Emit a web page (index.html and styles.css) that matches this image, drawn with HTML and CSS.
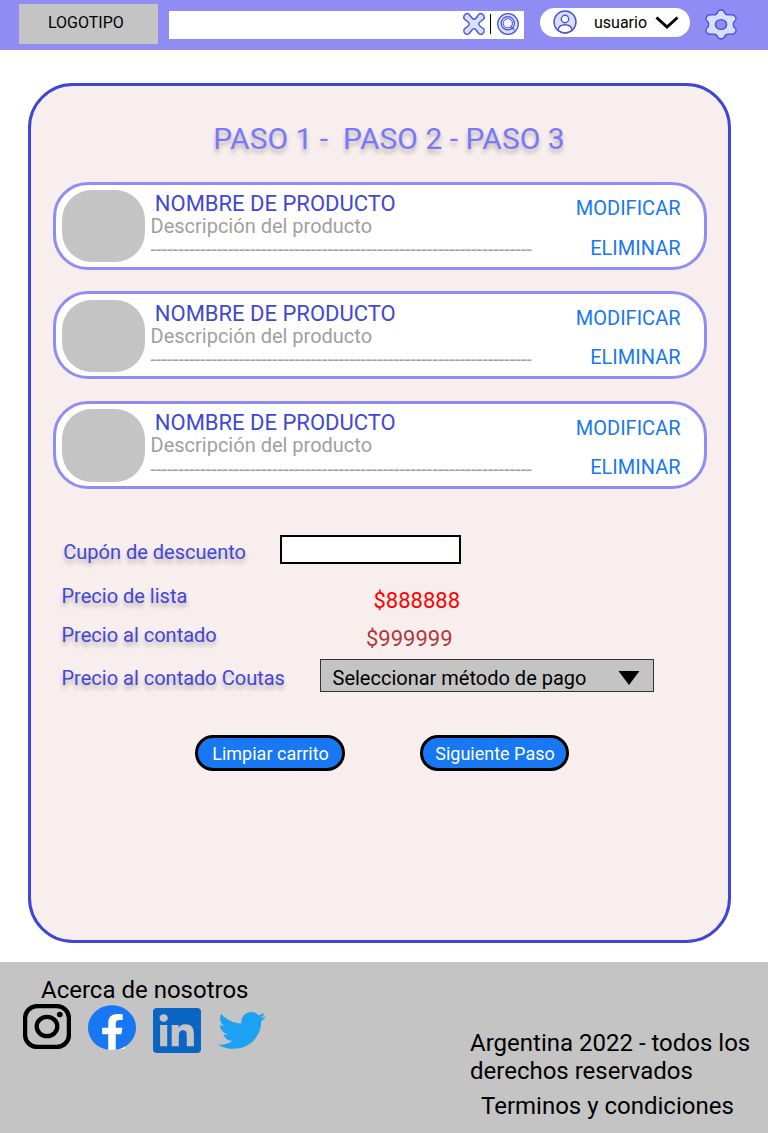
FILE: index.html
```html
<!DOCTYPE html>
<html lang="es">
<head>
<meta charset="utf-8">
<title>Carrito</title>
<link rel="stylesheet" href="styles.css">
</head>
<body>
<header class="topbar">
  <div class="logo">LOGOTIPO</div>
  <div class="search">
    <svg class="ico-clear" width="24" height="24" viewBox="0 0 24 24"><path d="M4 1.800Q5.500 1 7.300 2.500L9.500 5.500Q12 9 14.500 5.500L16.700 2.500Q18.500 1 20 1.800L21.800 3.500Q23 5.500 21.500 7.300L18.500 9.500Q15 12 18.500 14.500L21.500 16.700Q23 18.500 21.800 20.500L20 22.200Q18.500 23 16.700 21.500L14.500 18.500Q12 15 9.500 18.500L7.300 21.500Q5.500 23 4 22.200L2.200 20.500Q1 18.500 2.500 16.700L5.500 14.500Q9 12 5.500 9.500L2.500 7.300Q1 5.500 2.200 3.500Z"/></svg>
    <span class="bar"></span>
    <svg class="ico-find" width="24" height="24" viewBox="0 0 24 24"><circle cx="12" cy="12" r="10.300"/><circle cx="11.800" cy="11.300" r="6.600"/><circle cx="11.800" cy="11.300" r="4.600" stroke-width="1" class="lens"/><path d="M14.800 14.300L18.300 18"/></svg>
  </div>
  <div class="user">
    <svg class="avatar" width="24" height="24" viewBox="0 0 24 24"><circle cx="12" cy="12" r="11"/><circle class="hole" cx="12" cy="9" r="3.700"/><path class="hole" d="M5 20.300C5.500 16.200 8.500 14.800 12 14.800S18.500 16.200 19 20.300Q12 25.500 5 20.300Z"/></svg>
    <span class="user-name">usuario</span>
    <svg class="chevron" width="24" height="14" viewBox="0 0 24 14"><path d="M1.500 1.500L12 11L22.500 1.500"/></svg>
  </div>
  <svg class="gear" width="32" height="31" viewBox="0 0 32 32" preserveAspectRatio="none"><path d="M16 1Q18.500 1 19.200 3Q20.500 6.400 23.600 6.100L27.500 5.900Q29.500 6.300 30.700 8.500Q31.600 10.700 30.300 12L28.800 13.600Q27.500 16 28.800 18.400L30.300 20Q31.600 21.300 30.700 23.500Q29.500 25.700 27.500 26.100L23.600 25.900Q20.500 25.600 19.200 29Q18.500 31 16 31T12.800 29Q11.500 25.600 8.400 25.900L4.500 26.100Q2.500 25.700 1.300 23.500Q.4 21.300 1.700 20L3.200 18.400Q4.500 16 3.200 13.600L1.700 12Q.4 10.700 1.300 8.500Q2.500 6.300 4.500 5.900L8.400 6.100Q11.500 6.400 12.800 3Q13.500 1 16 1Z"/><ellipse cx="16" cy="16" rx="5.600" ry="5"/></svg>
</header>

<main class="card">
  <h1 class="steps">PASO 1 -  PASO 2 - PASO 3</h1>
  <section class="products">
    <article class="product">
      <div class="photo"></div>
      <div class="info"><h2>NOMBRE DE PRODUCTO</h2><p>Descripción del producto<br>---------------------------------------------------------------------</p></div>
      <div class="actions"><a>MODIFICAR</a><a>ELIMINAR</a></div>
    </article>
    <article class="product">
      <div class="photo"></div>
      <div class="info"><h2>NOMBRE DE PRODUCTO</h2><p>Descripción del producto<br>---------------------------------------------------------------------</p></div>
      <div class="actions"><a>MODIFICAR</a><a>ELIMINAR</a></div>
    </article>
    <article class="product">
      <div class="photo"></div>
      <div class="info"><h2>NOMBRE DE PRODUCTO</h2><p>Descripción del producto<br>---------------------------------------------------------------------</p></div>
      <div class="actions"><a>MODIFICAR</a><a>ELIMINAR</a></div>
    </article>
  </section>
  <section class="summary">
    <div class="row coupon"><span class="label">Cupón de descuento</span><div class="field"></div></div>
    <div class="row list"><span class="label">Precio de lista</span><span class="price list-price">$888888</span></div>
    <div class="row cash"><span class="label">Precio al contado</span><span class="price cash-price">$999999</span></div>
    <div class="row quotas"><span class="label">Precio al contado Coutas</span>
      <div class="select"><span>Seleccionar método de pago</span><svg width="22" height="14" viewBox="0 0 22 14"><path d="M.5 0H21.500L11 14Z"/></svg></div>
    </div>
  </section>
  <div class="buttons"><div class="btn">Limpiar carrito</div><div class="btn">Siguiente Paso</div></div>
</main>

<footer class="footer">
  <div class="about">
    <div class="about-title">Acerca de nosotros</div>
    <div class="social">
      <svg class="instagram" width="48" height="45" viewBox="0 0 48 45" fill="none" stroke="#000" stroke-width="4.300"><rect x="2.100" y="2.100" width="43.800" height="40.800" rx="12"/><ellipse cx="24" cy="22.500" rx="10.300" ry="9.700"/><ellipse cx="36.800" cy="10.500" rx="2.900" ry="2.700" fill="#000" stroke="none"/></svg>
      <svg class="facebook" width="48" height="45" viewBox="0 0 24 24" preserveAspectRatio="none"><path fill="#fff" d="M6.500 4h12v19.300l-4.600.6h-3.800l-3.600-1z"/><path fill="#1877f2" d="M24 12.073c0-6.627-5.373-12-12-12s-12 5.373-12 12c0 5.990 4.388 10.954 10.125 11.854v-8.385H7.078v-3.470h3.047V9.430c0-3.007 1.792-4.669 4.533-4.669 1.312 0 2.686.235 2.686.235v2.953H15.830c-1.491 0-1.956.925-1.956 1.874v2.250h3.328l-.532 3.470h-2.796v8.385C19.612 23.027 24 18.062 24 12.073z"/></svg>
      <svg class="linkedin" width="48" height="45" viewBox="0 0 24 24" preserveAspectRatio="none"><path fill="#0a66c2" d="M20.447 20.452h-3.554v-5.569c0-1.328-.027-3.037-1.852-3.037-1.853 0-2.136 1.445-2.136 2.939v5.667H9.351V9h3.414v1.561h.046c.477-.9 1.637-1.850 3.370-1.850 3.601 0 4.267 2.370 4.267 5.455v6.286zM5.337 7.433c-1.144 0-2.063-.926-2.063-2.065 0-1.138.92-2.063 2.063-2.063 1.140 0 2.064.925 2.064 2.063 0 1.139-.925 2.065-2.064 2.065zm1.782 13.019H3.555V9h3.564v11.452zM22.225 0H1.771C.792 0 0 .774 0 1.729v20.542C0 23.227.792 24 1.771 24h20.451C23.200 24 24 23.227 24 22.271V1.729C24 .774 23.200 0 22.222 0h.003z"/></svg>
      <svg class="twitter" width="48" height="45" viewBox="0 0 24 24" preserveAspectRatio="none"><path fill="#1da1f2" d="M23.953 4.570a10 10 0 01-2.825.775 4.958 4.958 0 002.163-2.723c-.951.555-2.005.959-3.127 1.184a4.920 4.920 0 00-8.384 4.482C7.690 8.095 4.067 6.130 1.640 3.162a4.822 4.822 0 00-.666 2.475c0 1.710.87 3.213 2.188 4.096a4.904 4.904 0 01-2.228-.616v.06a4.923 4.923 0 003.946 4.827 4.996 4.996 0 01-2.212.085 4.936 4.936 0 004.604 3.417 9.867 9.867 0 01-6.102 2.105c-.39 0-.779-.023-1.170-.067a13.995 13.995 0 007.557 2.209c9.053 0 13.998-7.496 13.998-13.985 0-.21 0-.42-.015-.63A9.935 9.935 0 0024 4.590z"/></svg>
    </div>
  </div>
  <div class="legal"><p>Argentina 2022 - todos los derechos reservados</p><p class="terms">Terminos y condiciones</p></div>
</footer>
</body>
</html>
```
FILE: styles.css
```css
* { box-sizing: border-box; }
body { margin: 0; width: 768px; background: #fff; font-family: Roboto, sans-serif; color: #000; }
h1, h2, p { margin: 0; font-weight: 400; }
svg { display: block; flex: none; }

.topbar { display: flex; align-items: flex-start; height: 50px; background: #8f8cf3; padding-left: 19px; }
.logo { width: 139px; height: 40px; margin-top: 4px; padding-left: 29px; background: #c4c4c4; font-size: 16px; line-height: 37px; }
.search { display: flex; align-items: center; justify-content: flex-end; width: 355px; height: 28px; margin: 11px 0 0 11px; background: #fff; padding: 0 4px 2px 0; }
.search svg, .user svg, .gear { fill: #d7e0ff; stroke: #4b50d8; stroke-width: 1.4; }
.search .ico-find { stroke-width: 1.2; }
.search .lens { fill: #f1f4ff; }
.bar { width: 1px; height: 20px; background: #000; margin: 0 5px 0 4px; }
.user { display: flex; align-items: center; width: 150px; height: 29px; margin: 8px 0 0 16px; padding-left: 13px; background: #fff; border-radius: 15px; }
.user .avatar { margin-bottom: 1.500px; }
.hole { fill: #fff; }
.user-name { width: 61px; margin-left: 17px; font-size: 16px; line-height: 29px; }
.user .chevron { fill: none; stroke: #000; stroke-width: 3; }
.gear { margin: 9px 0 0 15px; overflow: visible; }
.gear ellipse { fill: #8f8cf3; }

.card { width: 703px; height: 860px; margin: 33px 0 0 28px; padding: 35px 0 0 21.500px; border: 3px solid #3e45d7; border-radius: 45px; background: #f8eeed; }
.steps { margin-left: 160.700px; font-size: 30px; line-height: 36px; color: #7879fa; white-space: pre; text-shadow: 0 4px 4px rgba(0,0,0,.25); }
.products { display: flex; flex-direction: column; gap: 21.500px; margin-top: 24.600px; width: 654px; }
.product { display: flex; height: 88.200px; border: 3px solid #8f8cf3; border-radius: 35px; background: #fff; padding-left: 6px; }
.photo { width: 83px; height: 72.500px; margin-top: 5.400px; border-radius: 30px; background: #c4c4c4; }
.info { width: 410px; padding: 7.400px 0 0 6px; white-space: nowrap; }
.info h2 { padding-left: 4.300px; font-size: 22px; line-height: 24px; color: #4147d6; }
.info p { margin-top: -1px; font-size: 20px; line-height: 23.440px; color: #a0a0a0; }
.actions { display: flex; flex-direction: column; flex: 1; gap: 15.400px; padding: 11.600px 23px 0 0; text-align: right; font-size: 20px; line-height: 24px; color: #1877f2; }

.summary { padding-left: 9px; margin-top: 45.500px; }
.row { display: flex; align-items: flex-start; }
.label { font-size: 20px; line-height: 24px; color: #4147d6; text-shadow: 0 4px 4px rgba(0,0,0,.25); white-space: nowrap; }
.coupon { height: 47.500px; }
.coupon .label { width: 218.500px; padding: 5px 0 0 1.800px; }
.field { width: 181px; height: 29px; border: 2px solid #000; background: #fff; }
.list { height: 38px; }
.list .label { width: 312px; padding-top: 1.700px; }
.price { font-size: 22px; line-height: 26px; }
.list-price { padding-top: 6px; color: #f00; }
.cash-price { padding-top: 6px; color: #b13a3a; }
.cash { height: 38.500px; }
.cash .label { width: 304.500px; padding-top: 2.500px; }
.quotas .label { width: 258.500px; padding-top: 7px; }
.select { display: flex; align-items: center; justify-content: space-between; width: 333.500px; height: 33.500px; padding: 5px 13px 0 11.500px; border: 1px solid #333; background: #c4c4c4; font-size: 20px; }
.buttons { display: flex; gap: 75px; margin: 42.500px 0 0 142.500px; }
.btn { width: 149.500px; height: 36px; padding-left: 1.500px; border: 3px solid #000; border-radius: 18px; background: #1877f2; color: #fff; font-size: 18px; line-height: 32px; text-align: center; }

.footer { display: flex; justify-content: space-between; height: 171px; margin-top: 19px; padding: 0 10px 0 23px; background: #c4c4c4; font-size: 24px; line-height: 28px; }
.about { padding-top: 14px; }
.about-title { padding-left: 18px; }
.social { display: flex; gap: 17px; }
.facebook { margin-top: 1px; }
.linkedin { margin-top: 4px; }
.twitter { margin-top: 4px; }
.legal { width: 288px; padding-top: 67px; }
.terms { margin-top: 7px; padding-left: 11px; }
```
